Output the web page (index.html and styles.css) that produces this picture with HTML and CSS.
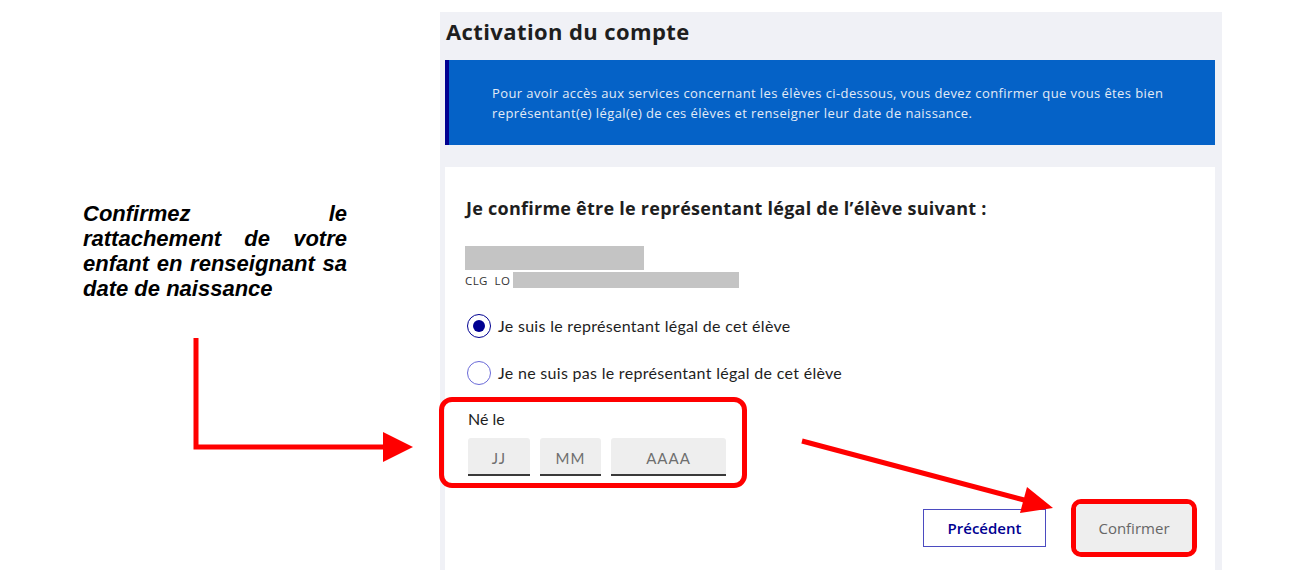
FILE: index.html
```html
<!DOCTYPE html>
<html lang="fr">
<head>
<meta charset="utf-8">
<title>Activation du compte</title>
<link rel="stylesheet" href="styles.css">
</head>
<body>
<div class="page">
  <aside class="annot">
    <p class="annot-text">Confirmez le rattachement de votre enfant en renseignant sa date de naissance</p>
  </aside>
  <main class="panel">
    <h1 class="title">Activation du compte</h1>
    <div class="notice">
      <p>Pour avoir accès aux services concernant les élèves ci-dessous, vous devez confirmer que vous êtes bien<br>représentant(e) légal(e) de ces élèves et renseigner leur date de naissance.</p>
    </div>
    <section class="card">
      <h2 class="card-title">Je confirme être le représentant légal de l’élève suivant :</h2>
      <div class="mask mask-name"></div>
      <div class="school"><span class="school-code">CLG&nbsp; LO</span><span class="mask mask-school"></span></div>
      <label class="radio"><span class="radio-dot checked"></span><span>Je suis le représentant légal de cet élève</span></label>
      <label class="radio radio-second"><span class="radio-dot"></span><span>Je ne suis pas le représentant légal de cet élève</span></label>
      <div class="birth highlight">
        <div class="birth-label">Né le</div>
        <div class="birth-fields">
          <div class="field f-day">JJ</div>
          <div class="field f-month">MM</div>
          <div class="field f-year">AAAA</div>
        </div>
      </div>
      <div class="actions">
        <button class="btn btn-prev">Précédent</button>
        <div class="highlight highlight-btn"><button class="btn btn-confirm">Confirmer</button></div>
      </div>
    </section>
  </main>
</div>
<svg class="arrows" width="1291" height="570" viewBox="0 0 1291 570">
  <path d="M196 338 V447 H386" fill="none" stroke="#ff0000" stroke-width="5"/>
  <polygon points="383,432 413,447 383,462" fill="#ff0000"/>
  <line x1="802" y1="441" x2="1028" y2="501" stroke="#ff0000" stroke-width="5"/>
  <polygon points="1053,508 1027,487 1020,513" fill="#ff0000"/>
</svg>
</body>
</html>
```
FILE: styles.css
```css
html, body {
  margin: 0;
  padding: 0;
  background: #ffffff;
}
body {
  width: 1291px;
  height: 570px;
  overflow: hidden;
  position: relative;
  font-family: "Open Sans", "Noto Sans", sans-serif;
  color: #161616;
}
.page {
  display: flex;
  padding-top: 12px;
}
.annot {
  width: 440px;
  flex: none;
  box-sizing: border-box;
  padding-left: 83px;
}
.annot-text {
  margin: 189px 0 0 0;
  width: 264px;
  font-family: "Liberation Sans", Arial, sans-serif;
  font-weight: 700;
  font-style: italic;
  font-size: 22px;
  line-height: 25px;
  text-align: justify;
  color: #000;
}
.panel {
  width: 782px;
  height: 558px;
  flex: none;
  box-sizing: border-box;
  background: #f0f1f6;
  padding: 5px 7px 0 5px;
  display: flex;
  flex-direction: column;
}
.title {
  margin: 0 0 15px 1px;
  font-size: 22px;
  line-height: 28px;
  font-weight: 700;
  letter-spacing: 0.4px;
  color: #1e1e1e;
}
.notice {
  height: 85px;
  box-sizing: border-box;
  background: #0562c7;
  border-left: 4px solid #000091;
  padding: 23px 10px 0 43px;
}
.notice p {
  margin: 0;
  font-size: 13px;
  line-height: 20px;
  color: #e3ebf6;
  letter-spacing: 0.4px;
  white-space: nowrap;
}
.card {
  margin-top: 22px;
  flex: 1;
  background: #ffffff;
  padding: 29px 18px 0 21px;
  display: flex;
  flex-direction: column;
  align-items: flex-start;
}
.card-title {
  margin: 0;
  font-size: 18px;
  line-height: 24px;
  font-weight: 700;
  letter-spacing: 0.25px;
  color: #1e1e1e;
}
.mask {
  background: #c4c4c4;
  display: block;
}
.mask-name {
  margin-top: 26px;
  margin-left: -1px;
  width: 179px;
  height: 24px;
}
.school {
  display: flex;
  align-items: center;
  margin-top: 2px;
  margin-left: -1px;
  height: 16px;
}
.school-code {
  font-size: 11.5px;
  letter-spacing: 0.4px;
  color: #333;
  width: 48px;
}
.mask-school {
  width: 226px;
  height: 16px;
}
.radio {
  display: flex;
  align-items: center;
  gap: 7px;
  margin-top: 26px;
  margin-left: 1px;
  font-family: Lato, "Open Sans", sans-serif;
  font-size: 16px;
  letter-spacing: 0.3px;
  color: #1e1e1e;
  line-height: 24px;
}
.radio-second {
  margin-top: 23px;
}
.radio-dot {
  width: 24px;
  height: 24px;
  box-sizing: border-box;
  border: 1.5px solid #6a6ad8;
  border-radius: 50%;
  display: flex;
  align-items: center;
  justify-content: center;
  background: #fff;
}
.radio-dot.checked {
  border-color: #000091;
}
.radio-dot.checked::after {
  content: "";
  width: 12px;
  height: 12px;
  border-radius: 50%;
  background: #000091;
}
.highlight {
  border: 5px solid #ff0000;
  border-radius: 13px;
}
.birth {
  margin-top: 12px;
  margin-left: -27px;
  width: 308px;
  height: 91px;
  box-sizing: border-box;
  padding: 7px 0 0 24px;
}
.birth-label {
  font-family: Lato, "Open Sans", sans-serif;
  font-size: 16px;
  line-height: 20px;
  color: #1e1e1e;
}
.birth-fields {
  display: flex;
  gap: 10px;
  margin-top: 9px;
}
.field {
  height: 38px;
  box-sizing: border-box;
  background: #eeeeee;
  border-bottom: 2px solid #3a3a3a;
  border-radius: 3px 3px 0 0;
  display: flex;
  align-items: center;
  justify-content: center;
  padding-top: 4px;
  font-family: Lato, "Open Sans", sans-serif;
  font-size: 15px;
  letter-spacing: 1px;
  color: #6f6f6f;
}
.f-day { width: 62px; }
.f-month { width: 61px; }
.f-year { width: 115px; }
.actions {
  align-self: stretch;
  display: flex;
  justify-content: flex-end;
  align-items: center;
  gap: 25px;
  margin-top: 11px;
}
.btn {
  font-family: "Open Sans", sans-serif;
  font-size: 15px;
  cursor: pointer;
  margin: 0;
}
.btn-prev {
  width: 123px;
  height: 38px;
  background: #fff;
  border: 1px solid #4b4bc0;
  color: #000091;
  font-weight: 600;
}
.highlight-btn {
  border-radius: 10px;
  overflow: hidden;
  display: flex;
  width: 126px;
  height: 58px;
  box-sizing: border-box;
}
.btn-confirm {
  flex: 1;
  border: none;
  background: #eeeeee;
  color: #666666;
}
.arrows {
  position: absolute;
  left: 0;
  top: 0;
  pointer-events: none;
}
```
